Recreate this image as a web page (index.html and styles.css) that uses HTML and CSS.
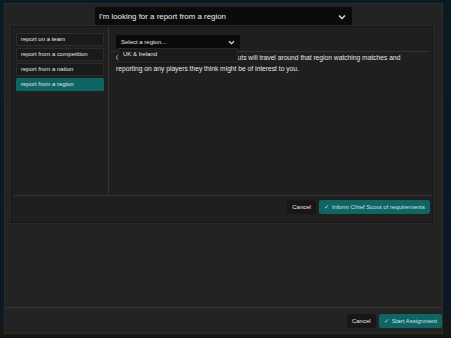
FILE: index.html
```html
<!DOCTYPE html>
<html>
<head>
<meta charset="utf-8">
<link rel="stylesheet" href="styles.css">
</head>
<body>
<div class="dialog">
  <div class="header">
    <div class="main-select">
      <span>I'm looking for a report from a region</span>
      <svg class="chev" width="8" height="6" viewBox="0 0 8 6"><path d="M1 1.5 L4 4.5 L7 1.5" fill="none" stroke="#ddd" stroke-width="1.4"/></svg>
    </div>
  </div>
  <div class="panel">
    <div class="panel-body">
      <div class="list">
        <div class="item">report on a team</div>
        <div class="item">report from a competition</div>
        <div class="item">report from a nation</div>
        <div class="item selected">report from a region</div>
      </div>
      <div class="content">
        <div class="select-wrap">
          <div class="region-select">
            <span>Select a region...</span>
            <svg class="chev" width="7" height="5" viewBox="0 0 8 6"><path d="M1 1.5 L4 4.5 L7 1.5" fill="none" stroke="#ddd" stroke-width="1.4"/></svg>
          </div>
          <div class="menu">UK &amp; Ireland</div>
        </div>
        <div class="rule"></div>
        <p class="desc">Once you have chosen a region your scouts will travel around that region watching matches and reporting on any players they think might be of interest to you.</p>
      </div>
    </div>
    <div class="panel-footer">
      <div class="btn">Cancel</div>
      <div class="btn primary"><span class="tick">&#10003;</span>Inform Chief Scout of requirements</div>
    </div>
  </div>
  <div class="spacer"></div>
  <div class="footer">
    <div class="btn">Cancel</div>
    <div class="btn primary"><span class="tick">&#10003;</span>Start Assignment</div>
  </div>
</div>
</body>
</html>
```
FILE: styles.css
```css
html, body {
  margin: 0;
  padding: 0;
}
body {
  width: 451px;
  height: 338px;
  overflow: hidden;
  background: linear-gradient(180deg, #0a1a22 0%, #0b1826 60%, #0d1726 90%, #161a0c 100%);
  font-family: "Liberation Sans", Arial, sans-serif;
  color: #e6e6e6;
  padding: 3px 8px 4px 4px;
  box-sizing: border-box;
}
.dialog {
  width: 439px;
  height: 331px;
  background: #232323;
  border: 1px solid #2b2b2b;
  box-sizing: border-box;
  display: flex;
  flex-direction: column;
}
.header {
  display: flex;
  justify-content: flex-start;
  padding: 3px 0 0 90px;
  height: 22px;
  box-sizing: border-box;
}
.main-select {
  width: 257px;
  height: 19px;
  background: #0b0b0b;
  border-radius: 2px;
  display: flex;
  align-items: center;
  justify-content: space-between;
  padding: 0 6px 0 4px;
  box-sizing: border-box;
  font-size: 7.9px;
  color: #eee;
}
.chev { display: block; }
.panel {
  margin-left: 6px;
  width: 422px;
  height: 197px;
  background: #1f1f1f;
  border: 1px solid #161616;
  box-shadow: 0 0 0 1px #2a2a2a;
  box-sizing: border-box;
  display: flex;
  flex-direction: column;
}
.panel-body {
  display: flex;
  height: 168px;
  border-bottom: 1px solid #363636;
  margin: 0 0 0 2px;
}
.list {
  width: 95px;
  padding: 6px 0 0 2px;
  border-right: 1px solid #333;
  display: flex;
  flex-direction: column;
  gap: 2px;
  box-sizing: border-box;
}
.item {
  width: 88px;
  height: 13px;
  box-sizing: border-box;
  background: #1a1a1a;
  border: 1px solid #2c2c2c;
  border-radius: 1px;
  font-size: 6px;
  line-height: 11px;
  padding-left: 4px;
  color: #e6e6e6;
  white-space: nowrap;
}
.item.selected {
  background: #0f6464;
  border-color: #0f6464;
}
.content {
  flex: 1;
  display: flex;
  flex-direction: column;
  padding: 8px 0 0 7px;
  position: relative;
}
.select-wrap {
  position: relative;
  height: 14px;
  z-index: 2;
}
.region-select {
  width: 124px;
  height: 14px;
  background: #0b0b0b;
  border-radius: 2px;
  display: flex;
  align-items: center;
  justify-content: space-between;
  padding: 0 5px 0 5px;
  box-sizing: border-box;
  font-size: 6px;
  color: #e6e6e6;
}
.menu {
  position: absolute;
  left: 2px;
  top: 13px;
  width: 120px;
  height: 15px;
  background: #1b1b1b;
  border: 1px solid #2a2a2a;
  box-shadow: 0 1px 2px rgba(0,0,0,0.6);
  box-sizing: border-box;
  font-size: 6px;
  line-height: 11px;
  padding-left: 4px;
  color: #e6e6e6;
}
.rule {
  height: 1px;
  background: #333;
  margin: 2px 2px 0 -6px;
}
.desc {
  margin: 1px 10px 0 0;
  font-size: 6.7px;
  line-height: 10.5px;
  color: #e6e6e6;
}
.panel-footer {
  display: flex;
  justify-content: flex-end;
  gap: 3px;
  padding: 4px 2px 0 0;
}
.btn {
  height: 14px;
  box-sizing: border-box;
  background: #171717;
  border-radius: 2px;
  font-size: 6px;
  line-height: 14px;
  padding: 0 5px;
  color: #e6e6e6;
  white-space: nowrap;
}
.btn.primary {
  background: #0f6464;
  color: #cfe3e3;
  padding: 0 5px 0 5px;
}
.tick {
  font-size: 6px;
  margin-right: 3px;
  color: #cfe3e3;
}
.spacer { flex: 1; }
.footer {
  border-top: 1px solid #363636;
  height: 26px;
  box-sizing: border-box;
  display: flex;
  justify-content: flex-end;
  gap: 3px;
  padding: 6px 0 0 0;
}
```
